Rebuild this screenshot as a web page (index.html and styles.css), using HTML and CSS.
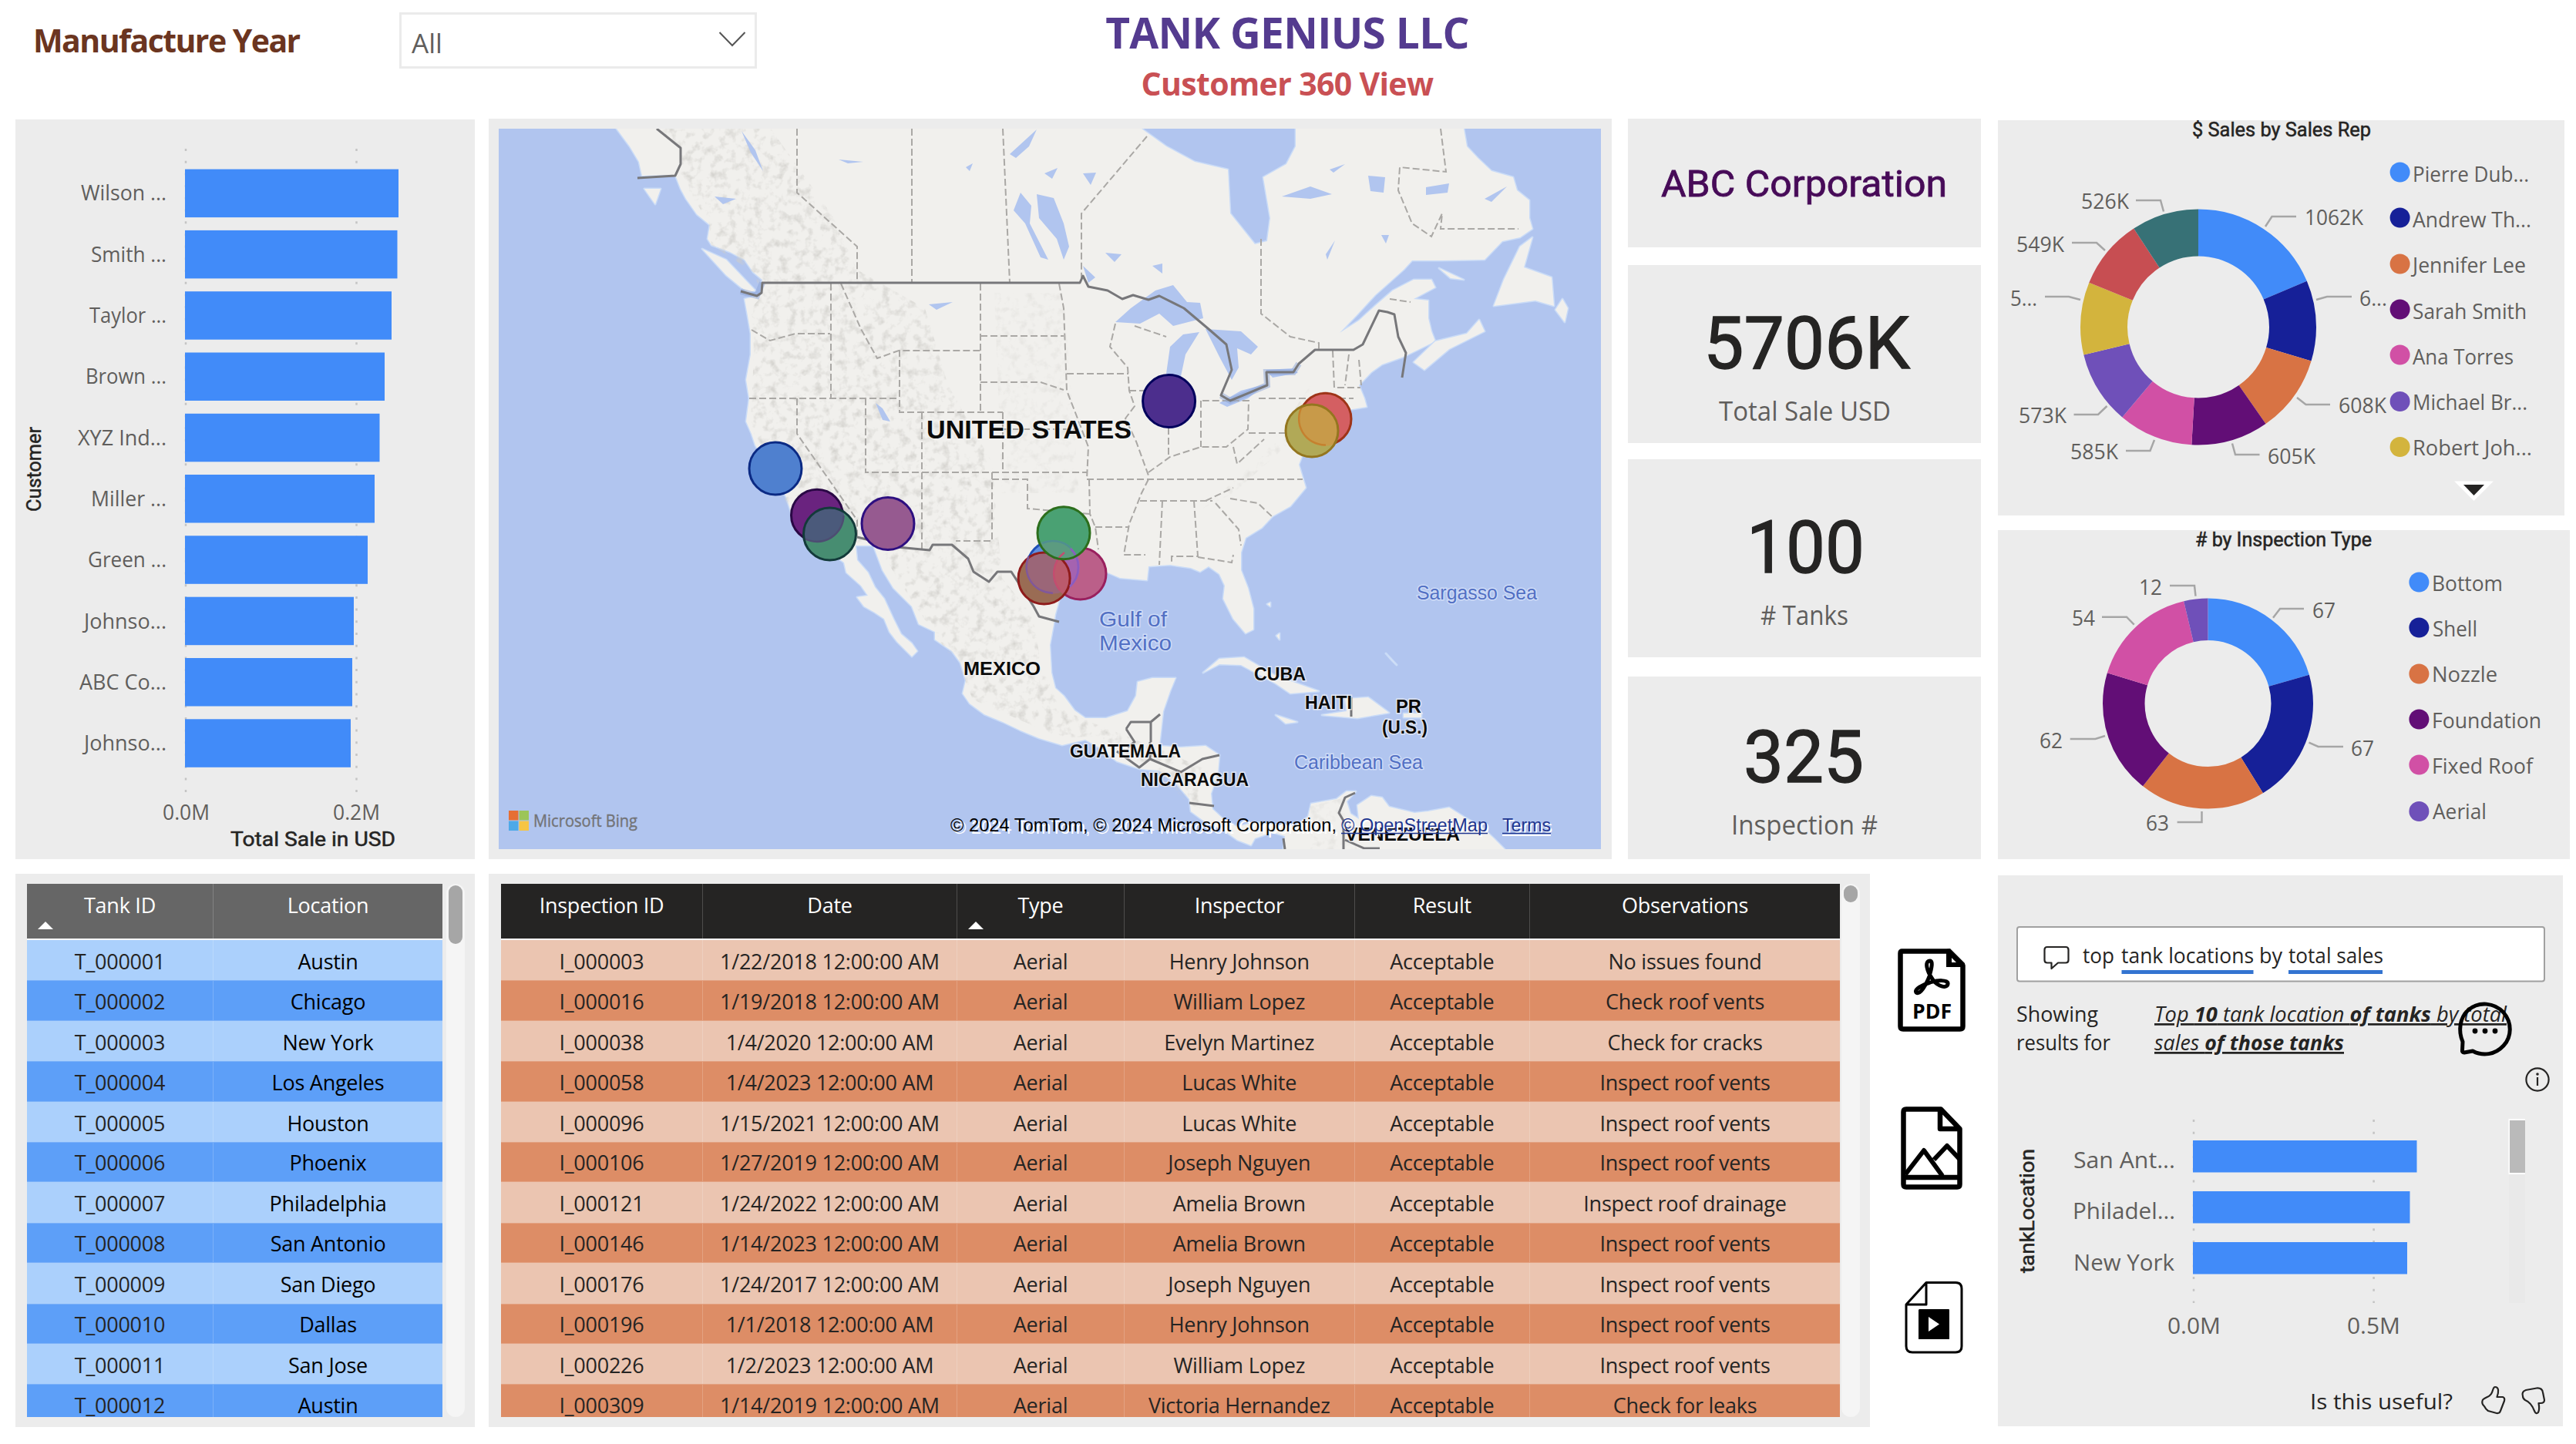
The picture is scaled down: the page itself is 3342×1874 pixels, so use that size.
FILE: index.html
```html
<!DOCTYPE html>
<html lang="en">
<head>
<meta charset="utf-8">
<title>Tank Genius LLC - Customer 360 View</title>
<link rel="stylesheet" href="styles.css">
</head>
<body>
<div class="page">
<header class="top">
  <h2 class="filter-label">Manufacture Year</h2>
  <div class="select"><span>All</span>
    <svg width="36" height="22" viewBox="0 0 36 22"><path d="M1.500 2 18 19 34.500 2" fill="none" stroke="#555" stroke-width="2"/></svg>
  </div>
  <div class="titles"><h1>TANK GENIUS LLC</h1><p>Customer 360 View</p></div>
</header>

<section class="row row-a">
  <div class="panel customers">
    <svg class="fill" viewBox="20 155 596 960">
      <path class="grid" d="M241 193V1030M462.500 193V1030"/>
      <g class="bar">
        <rect x="240" y="219.600" width="277" height="62.500"/><rect x="240" y="298.900" width="275.500" height="62.500"/>
        <rect x="240" y="378.200" width="268" height="62.500"/><rect x="240" y="457.500" width="259" height="62.500"/>
        <rect x="240" y="536.800" width="252.500" height="62.500"/><rect x="240" y="616" width="246" height="62.500"/>
        <rect x="240" y="695.300" width="237" height="62.500"/><rect x="240" y="774.700" width="219" height="62.500"/>
        <rect x="240" y="854" width="217" height="62.500"/><rect x="240" y="933.300" width="215" height="62.500"/>
      </g>
      <g class="seg">
        <text x="105" y="260" textLength="111" lengthAdjust="spacingAndGlyphs">Wilson ...</text>
        <text x="118" y="340" textLength="98" lengthAdjust="spacingAndGlyphs">Smith ...</text>
        <text x="116" y="419" textLength="100" lengthAdjust="spacingAndGlyphs">Taylor ...</text>
        <text x="111" y="498" textLength="105" lengthAdjust="spacingAndGlyphs">Brown ...</text>
        <text x="101" y="578" textLength="115" lengthAdjust="spacingAndGlyphs">XYZ Ind...</text>
        <text x="118" y="657" textLength="98" lengthAdjust="spacingAndGlyphs">Miller ...</text>
        <text x="114" y="736" textLength="102" lengthAdjust="spacingAndGlyphs">Green ...</text>
        <text x="109" y="816" textLength="107" lengthAdjust="spacingAndGlyphs">Johnso...</text>
        <text x="103" y="895" textLength="113" lengthAdjust="spacingAndGlyphs">ABC Co...</text>
        <text x="109" y="974" textLength="107" lengthAdjust="spacingAndGlyphs">Johnso...</text>
        <text x="211" y="1064" textLength="61" lengthAdjust="spacingAndGlyphs">0.0M</text>
        <text x="432" y="1064" textLength="61" lengthAdjust="spacingAndGlyphs">0.2M</text>
      </g>
      <text class="din" x="299" y="1097.500" textLength="214" lengthAdjust="spacingAndGlyphs">Total Sale in USD</text>
      <text class="din" transform="translate(53 664) rotate(-90)" textLength="110" lengthAdjust="spacingAndGlyphs">Customer</text>
    </svg>
  </div>

  <div class="panel map">
    <svg class="fill" viewBox="647 167 1430 935">
      <defs>
        <filter id="relief" x="0" y="0" width="100%" height="100%">
          <feTurbulence type="fractalNoise" baseFrequency="0.09" numOctaves="3" seed="4"/>
          <feColorMatrix values="0 0 0 0 0.62  0 0 0 0 0.61  0 0 0 0 0.58  2.6 0 0 0 -1.250"/>
          <feComposite in2="SourceAlpha" operator="in"/>
        </filter>
        <clipPath id="c-la"><circle cx="1060" cy="668.700" r="35"/></clipPath>
        <clipPath id="c-ny"><circle cx="1719.500" cy="543.700" r="35"/></clipPath>
        <clipPath id="c-au"><circle cx="1366" cy="735.700" r="35"/></clipPath>
        <clipPath id="c-ho"><circle cx="1401.500" cy="744.600" r="35"/></clipPath>
      </defs>
      <rect x="647" y="167" width="1430" height="935" fill="#b1c5ef"/>
      <g class="land">
        <path d="M800 167 817 190 829 210 833 228 876 227 883 245 890 258 904 278 921 292 918 310 923 318 947 327 966 337 977 353 989 363 987 383 966 388 970 410 974 433 974 460 968 493 972 517 968 547 975 563 980 578 1000 610 1020 645 1027 667 1041 693 1060 705 1081 720 1095 730 1098 743 1117 760 1126 773 1112 775 1121 787 1135 795 1147 803 1154 820 1164 833 1183 852 1190 845 1183 835 1169 823 1159 803 1147 777 1135 762 1126 743 1112 727 1110 708 1133 708 1145 740 1159 763 1183 787 1192 810 1213 820 1213 830 1235 845 1246 860 1253 883 1249 900 1258 913 1277 927 1301 937 1324 948 1348 958 1378 967 1408 960 1426 970 1449 988 1479 998 1504 1000 1527 1018 1543 1037 1545 1053 1564 1067 1587 1077 1605 1090 1623 1097 1628 1088 1651 1080 1667 1085 1665 1102 1952 1102 1938 1088 1922 1073 1899 1060 1880 1048 1853 1053 1835 1055 1802 1047 1793 1035 1779 1033 1761 1045 1763 1063 1752 1056 1747 1040 1759 1027 1747 1027 1734 1037 1701 1043 1697 1060 1678 1073 1651 1070 1628 1067 1605 1073 1587 1063 1573 1050 1571 1030 1580 1003 1582 980 1564 968 1532 970 1504 968 1506 950 1509 923 1518 897 1525 880 1495 880 1476 885 1474 903 1463 923 1435 932 1408 932 1394 922 1380 903 1369 893 1364 873 1362 837 1367 810 1369 797 1378 765 1400 748 1437 743 1453 750 1488 753 1490 735 1518 733 1545 737 1557 742 1568 735 1582 745 1589 760 1587 777 1600 803 1616 822 1626 817 1626 790 1619 763 1610 740 1610 717 1616 698 1637 685 1651 670 1674 657 1694 633 1685 603 1690 590 1715 572 1738 550 1743 533 1773 528 1770 517 1763 500 1779 483 1793 473 1821 463 1862 443 1857 430 1853 413 1853 390 1834 388 1862 373 1857 363 1834 363 1807 377 1784 397 1763 416 1738 432 1761 408 1784 383 1802 367 1821 350 1832 338 1871 338 1926 337 1949 313 1972 308 1988 297 1984 283 1984 260 1968 247 1963 230 1935 222 1917 205 1903 190 1899 167 1681 167 1681 190 1669 213 1639 230 1648 283 1644 313 1628 317 1596 277 1593 220 1550 210 1513 190 1481 167Z"/>
        <path d="M911 323 942 337 980 377 970 380 942 357ZM836 245H857L850 265ZM1919 415 1926 430 1880 453 1848 480 1834 470 1862 443 1903 433ZM1988 308 1977 347 2013 360 2016 397 1992 390 1938 397 1951 363 1972 320ZM2027 388 2034 400 2030 418 2018 402ZM1867 348 1899 363 1882 361ZM1561 873 1582 855 1614 853 1655 877 1711 897 1674 900 1655 887 1610 863 1582 862ZM1715 928 1747 923 1745 907 1775 905 1802 925 1761 932ZM1655 928 1683 937 1668 939ZM1821 926H1844V931H1821ZM1644 784 1648 782 1648 787ZM1656 825 1660 822 1660 830ZM1798 848 1812 863 1806 857Z"/>
      </g>
      <g filter="url(#relief)">
        <path opacity=".8" d="M852 167 883 192 883 230 920 290 923 318 977 353 989 383 975 400 978 460 974 547 985 585 1041 693 1110 705 1138 708 1183 780 1249 875 1262 908 1378 958 1426 955 1479 990 1545 1045 1560 1050 1568 1000 1500 970 1435 945 1375 920 1350 860 1340 800 1300 750 1287 600 1230 500 1200 400 1112 350 1080 280 1000 167Z"/>
        <path opacity=".35" d="M1560 660 1640 590 1700 500 1690 560 1600 640ZM1700 1046 1745 1035 1760 1102 1700 1102ZM1290 380 1380 380 1400 640 1300 640Z"/>
      </g>
      <g class="lake">
        <path d="M1447 418 1467 400 1499 377 1522 370 1540 392 1557 393 1561 413 1522 423 1504 407 1479 420ZM1513 485 1518 450 1535 434 1556 431 1538 460 1531 493ZM1564 427 1610 430 1632 450 1623 460 1605 452 1607 477 1598 493 1582 463ZM1582 523 1610 507 1644 498 1619 517 1592 528ZM1642 480 1678 478 1684 484 1651 490ZM1345 252 1367 257 1380 290 1387 320 1380 337 1371 310 1348 283ZM1324 250 1338 267 1336 290 1360 337 1350 334 1330 290 1315 273ZM1405 345 1421 360 1412 367ZM1663 255 1700 242 1728 252 1700 258ZM1775 228 1797 230 1795 250 1778 248ZM1850 243 1880 238 1878 250 1850 253ZM1725 220 1745 213 1730 224ZM1720 330 1732 312 1722 337ZM1792 305 1802 305 1798 316ZM1926 258 1955 242 1935 262ZM1495 345 1508 342 1508 355ZM1434 328 1455 330 1446 340ZM1310 200 1345 168 1335 190 1318 205ZM1355 225 1372 218 1365 232ZM962 170 980 195 990 222 974 198ZM1136 523 1145 530 1155 547 1145 545ZM1205 395 1236 392 1215 402ZM1088 207 1120 210 1100 212ZM1253 217 1262 212 1258 222ZM1405 225 1422 224 1415 240ZM927 255 955 258 938 265Z"/>
      </g>
      <path class="state" d="M1034 167V250L1112 320V363M1183 167V367M1301 167 1310 367M1078 368V517M975 428 999 442 1032 433H1077M972 517H1166M1091 368 1117 427 1138 465 1166 455H1272M1167 454V535H1301M1272 368V535M1272 436H1380M1272 496H1350L1380 506M1374 368 1380 400 1384 507 1398 543 1412 580 1410 622M1034 517V563L1112 675V697M1123 517V613H1410M1196 535V712M1287 613V702H1240M1301 535V613M1301 557H1400M1287 622H1333V660L1414 667M1384 485H1464M1447 420 1440 450 1463 477 1465 507 1472 527 1460 543 1474 573 1490 617M1472 423 1513 437M1465 507H1490M1516 555V590M1558 520V580M1490 613 1518 593 1558 580H1591L1619 557 1620 520H1560M1633 517H1756M1620 562H1670L1680 580M1600 580 1605 602 1640 570M1410 622H1690M1636 310V407L1674 437 1711 445V453M1488 177 1403 277V363M1869 167 1876 223 1816 217 1814 247 1832 290 1857 307 1871 277 1869 297H1970M1729 455 1731 503H1765M1750 460 1745 500M1763 467 1766 500M1479 650H1573M1564 650 1600 633M1596 647 1632 653 1651 671M1508 650 1504 733M1549 650 1554 722H1520V732M1554 723 1598 730 1600 720M1577 653 1607 687 1610 708M1421 684H1465M1490 622 1481 640 1465 680 1458 720H1486M1413 622 1414 667 1421 684 1425 713M1803 388 1830 392"/>
      <path class="halo" d="M1584 513 1596 520 1644 500 1643 483 1678 483 1685 472M961 378 982 384 989 367"/>
      <path class="border" d="M961 378 982 384 988 380 989 367H1401L1405 358 1412 372 1437 377 1456 388 1470 383 1490 389 1504 384 1536 400 1568 427 1591 447 1598 480 1584 513 1596 520 1644 500 1643 483H1678L1685 472 1706 454H1756L1768 447 1789 403 1800 405 1809 408 1814 437 1824 458 1819 490M1112 697 1164 710 1206 714 1210 707H1235L1256 725 1263 742 1283 755 1294 742H1312L1341 787 1348 800 1374 807M852 167 883 192V213L876 228 827 231M1461 946 1467 937H1493V963M1461 946 1472 963 1463 970M1493 937 1505 927M1449 975 1478 996 1492 985 1532 1002 1560 985 1582 980M1492 985V963M1543 1042 1575 1046M1743 1102V1065L1737 1055 1745 1035 1758 1029M1753 905V930M1665 1088 1667 1102M1745 1090 1770 1101H1790"/>
      <g class="country">
        <text x="1202" y="569" font-size="33" textLength="266" lengthAdjust="spacingAndGlyphs">UNITED STATES</text>
        <text x="1250" y="876" font-size="24.500" textLength="100" lengthAdjust="spacingAndGlyphs">MEXICO</text>
        <text x="1627" y="883" textLength="67" lengthAdjust="spacingAndGlyphs">CUBA</text>
        <text x="1693" y="920" textLength="61" lengthAdjust="spacingAndGlyphs">HAITI</text>
        <text x="1811" y="925" textLength="33" lengthAdjust="spacingAndGlyphs">PR</text>
        <text x="1793" y="952" textLength="59" lengthAdjust="spacingAndGlyphs">(U.S.)</text>
        <text x="1388" y="983" textLength="144" lengthAdjust="spacingAndGlyphs">GUATEMALA</text>
        <text x="1480" y="1020" textLength="140" lengthAdjust="spacingAndGlyphs">NICARAGUA</text>
        <text x="1745" y="1091" textLength="149" lengthAdjust="spacingAndGlyphs">VENEZUELA</text>
      </g>
      <g class="sea">
        <text x="1426" y="813" font-size="28.500" textLength="88" lengthAdjust="spacingAndGlyphs">Gulf of</text>
        <text x="1426" y="844" font-size="28.500" textLength="94" lengthAdjust="spacingAndGlyphs">Mexico</text>
        <text x="1838" y="778" textLength="156" lengthAdjust="spacingAndGlyphs">Sargasso Sea</text>
        <text x="1679" y="998" textLength="167" lengthAdjust="spacingAndGlyphs">Caribbean Sea</text>
      </g>
      <g>
        <circle cx="1006" cy="608" r="34" fill="#4f80cf"/>
        <circle cx="1060" cy="668.700" r="34" fill="#6a237f"/>
        <circle cx="1060" cy="668.700" r="33.500" fill="none" stroke="#2a0845" stroke-width="3"/>
        <circle cx="1076.500" cy="693" r="34" fill="#478d71"/>
        <circle cx="1076.500" cy="693" r="34" fill="#4b5a7b" clip-path="url(#c-la)"/>
        <circle cx="1152" cy="679.500" r="34" fill="#965a90"/>
        <circle cx="1516.600" cy="520.500" r="34" fill="#4c2e8d"/>
        <circle cx="1719.500" cy="543.700" r="34" fill="#d45f62"/>
        <circle cx="1719.500" cy="543.700" r="33.500" fill="none" stroke="#9e3418" stroke-width="3"/>
        <circle cx="1702" cy="559" r="34" fill="#b1a957"/>
        <circle cx="1702" cy="559" r="34" fill="#c89a49" clip-path="url(#c-ny)"/>
        <circle cx="1366" cy="735.700" r="33.500" fill="#5f8fe0" stroke="#2050b8" stroke-width="3"/>
        <circle cx="1401.500" cy="744.600" r="34" fill="#bb5f89"/>
        <circle cx="1401.500" cy="744.600" r="34" fill="#a563b0" clip-path="url(#c-au)"/>
        <circle cx="1401.500" cy="744.600" r="33.500" fill="none" stroke="#99205e" stroke-width="3"/>
        <circle cx="1354.600" cy="750.500" r="34" fill="#9a6c54"/>
        <circle cx="1354.600" cy="750.500" r="34" fill="#9b6678" clip-path="url(#c-au)"/>
        <circle cx="1354.600" cy="750.500" r="34" fill="#bb5a6c" clip-path="url(#c-ho)"/>
        <circle cx="1354.600" cy="750.500" r="33.500" fill="none" stroke="#8f1b1b" stroke-width="3"/>
        <circle cx="1380" cy="691.700" r="34" fill="#4aa173"/>
        <circle cx="1380" cy="691.700" r="34" fill="#5c9b80" clip-path="url(#c-au)"/>
      </g>
      <g class="ghost">
        <path stroke="#4d4d72" d="M1094.500 669A34.500 34.500 0 0 1 1044 699"/>
        <path stroke="#c5812f" d="M1720 577.500A34 34 0 0 1 1690 526"/>
        <path stroke="#80589a" d="M1334.500 722A34 34 0 0 0 1366 769.700"/>
        <path stroke="#8a5cc0" d="M1389 712A34 34 0 0 1 1388 761"/>
        <path stroke="#c34d70" d="M1381 717A34 34 0 0 0 1375 766"/>
        <path stroke="#4f8f90" d="M1352 705A34 34 0 0 1 1389 711"/>
      </g>
      <g class="outline">
        <circle cx="1006" cy="608" r="34" stroke="#0b2a84"/>
        <circle cx="1076.500" cy="693" r="34" stroke="#133a3a"/>
        <circle cx="1152" cy="679.500" r="34" stroke="#2d0f80"/>
        <circle cx="1516.600" cy="520.500" r="34" stroke="#00005c"/>
        <circle cx="1702" cy="559" r="34" stroke="#94761f"/>
        <circle cx="1380" cy="691.700" r="34" stroke="#2c6e1c"/>
      </g>
      <path fill="#e66f34" d="M660 1052h12.500v12.500h-12.500z"/><path fill="#9cc558" d="M673.500 1052h12.500v12.500h-12.500z"/>
      <path fill="#4ea9e8" d="M660 1065.500h12.500v12.500h-12.500z"/><path fill="#f6c544" d="M673.500 1065.500h12.500v12.500h-12.500z"/>
      <text class="bing" x="692" y="1073" textLength="135" lengthAdjust="spacingAndGlyphs">Microsoft Bing</text>
      <g class="credit">
        <text x="1233" y="1079" textLength="501" lengthAdjust="spacingAndGlyphs">© 2024 TomTom, © 2024 Microsoft Corporation,</text>
        <text class="link" x="1740" y="1079" textLength="190" lengthAdjust="spacingAndGlyphs">© OpenStreetMap</text>
        <text class="link" x="1949" y="1079" textLength="63" lengthAdjust="spacingAndGlyphs">Terms</text>
      </g>
      <path d="M1949 1084H2012" stroke="#fff" stroke-width="2"/>
      <path d="M1740 1081.500H1930M1949 1081.500H2012" stroke="#1e3690" stroke-width="1.500"/>
    </svg>
  </div>

  <div class="kpis">
    <div class="panel k1"><svg class="fill" viewBox="2112 154 458 167">
      <text class="corp" x="2155" y="254.500" textLength="371" lengthAdjust="spacingAndGlyphs">ABC Corporation</text></svg></div>
    <div class="panel k2"><svg class="fill" viewBox="2112 344 458 231">
      <text class="num" x="2210" y="478" textLength="268" lengthAdjust="spacingAndGlyphs">5706K</text>
      <text class="cap" x="2230" y="545.500" textLength="223" lengthAdjust="spacingAndGlyphs">Total Sale USD</text></svg></div>
    <div class="panel k3"><svg class="fill" viewBox="2112 596 458 257">
      <text class="num" x="2266" y="743" textLength="153" lengthAdjust="spacingAndGlyphs">100</text>
      <text class="cap" x="2284" y="811" textLength="114" lengthAdjust="spacingAndGlyphs"># Tanks</text></svg></div>
    <div class="panel k4"><svg class="fill" viewBox="2112 878 458 237">
      <text class="num" x="2262" y="1015" textLength="156" lengthAdjust="spacingAndGlyphs">325</text>
      <text class="cap" x="2246" y="1083" textLength="190" lengthAdjust="spacingAndGlyphs">Inspection #</text></svg></div>
  </div>

  <div class="donuts">
    <div class="panel d1"><svg class="fill" viewBox="2592 156 735 513">
      <text class="din" x="2844" y="177" textLength="232" lengthAdjust="spacingAndGlyphs">$ Sales by Sales Rep</text>
      <g class="ring" stroke-width="61" transform="rotate(-90 2852 424.500)">
        <circle cx="2852" cy="424.500" r="122.500" pathLength="5706" stroke="#418bf9" stroke-dasharray="1062 5706"/>
        <circle cx="2852" cy="424.500" r="122.500" pathLength="5706" stroke="#162098" stroke-dasharray="630 5706" stroke-dashoffset="-1062"/>
        <circle cx="2852" cy="424.500" r="122.500" pathLength="5706" stroke="#d87344" stroke-dasharray="608 5706" stroke-dashoffset="-1692"/>
        <circle cx="2852" cy="424.500" r="122.500" pathLength="5706" stroke="#620e76" stroke-dasharray="605 5706" stroke-dashoffset="-2300"/>
        <circle cx="2852" cy="424.500" r="122.500" pathLength="5706" stroke="#d150a5" stroke-dasharray="585 5706" stroke-dashoffset="-2905"/>
        <circle cx="2852" cy="424.500" r="122.500" pathLength="5706" stroke="#6f50b9" stroke-dasharray="573 5706" stroke-dashoffset="-3490"/>
        <circle cx="2852" cy="424.500" r="122.500" pathLength="5706" stroke="#d3b43d" stroke-dasharray="568 5706" stroke-dashoffset="-4063"/>
        <circle cx="2852" cy="424.500" r="122.500" pathLength="5706" stroke="#c74e52" stroke-dasharray="549 5706" stroke-dashoffset="-4631"/>
        <circle cx="2852" cy="424.500" r="122.500" pathLength="5706" stroke="#377176" stroke-dasharray="526 5706" stroke-dashoffset="-5180"/>
      </g>
      <path class="lead" d="M2771 260H2803L2807 274.500M2939 294 2947.500 281H2979M2688 315H2720L2731 325M2653 385H2684L2699 389M3005 389 3019 385H3051M2980 516 2991.500 525H3023M2896 575.500 2900 590H2931.500M2758 585H2789.500L2795 571M2690.500 538H2722L2733.500 527"/>
      <g class="seg">
        <text x="2700" y="271" textLength="62" lengthAdjust="spacingAndGlyphs">526K</text>
        <text x="2990" y="292" textLength="76" lengthAdjust="spacingAndGlyphs">1062K</text>
        <text x="2616" y="326.500" textLength="62" lengthAdjust="spacingAndGlyphs">549K</text>
        <text x="2608" y="397" textLength="35" lengthAdjust="spacingAndGlyphs">5...</text>
        <text x="3061" y="397" textLength="36" lengthAdjust="spacingAndGlyphs">6...</text>
        <text x="3034" y="535.500" textLength="62" lengthAdjust="spacingAndGlyphs">608K</text>
        <text x="2942" y="601.500" textLength="62" lengthAdjust="spacingAndGlyphs">605K</text>
        <text x="2686" y="596" textLength="62" lengthAdjust="spacingAndGlyphs">585K</text>
        <text x="2619" y="549" textLength="62" lengthAdjust="spacingAndGlyphs">573K</text>
        <text x="3130" y="235.500" textLength="151" lengthAdjust="spacingAndGlyphs">Pierre Dub...</text>
        <text x="3130" y="295" textLength="154" lengthAdjust="spacingAndGlyphs">Andrew Th...</text>
        <text x="3130" y="354" textLength="147" lengthAdjust="spacingAndGlyphs">Jennifer Lee</text>
        <text x="3130" y="413.500" textLength="148" lengthAdjust="spacingAndGlyphs">Sarah Smith</text>
        <text x="3130" y="472.500" textLength="131" lengthAdjust="spacingAndGlyphs">Ana Torres</text>
        <text x="3130" y="531.500" textLength="149" lengthAdjust="spacingAndGlyphs">Michael Br...</text>
        <text x="3130" y="591" textLength="155" lengthAdjust="spacingAndGlyphs">Robert Joh...</text>
      </g>
      <g><circle cx="3113.600" cy="223.500" r="13" fill="#418bf9"/><circle cx="3113.600" cy="282.500" r="13" fill="#162098"/><circle cx="3113.600" cy="342.500" r="13" fill="#d87344"/><circle cx="3113.600" cy="401.500" r="13" fill="#620e76"/><circle cx="3113.600" cy="460.500" r="13" fill="#d150a5"/><circle cx="3113.600" cy="521" r="13" fill="#6f50b9"/><circle cx="3113.600" cy="580" r="13" fill="#d3b43d"/></g>
      <path fill="#fff" d="M3184 624.500H3235L3209.500 650Z"/><path fill="#252423" d="M3196 629H3223L3209.500 643Z"/>
    </svg></div>
    <div class="panel d2"><svg class="fill" viewBox="2592 688 742 427">
      <text class="din" x="2848" y="709" textLength="229" lengthAdjust="spacingAndGlyphs"># by Inspection Type</text>
      <g class="ring" stroke-width="54.500" transform="rotate(-90 2864.500 913)">
        <circle cx="2864.500" cy="913" r="109.250" pathLength="325" stroke="#418bf9" stroke-dasharray="67 325"/>
        <circle cx="2864.500" cy="913" r="109.250" pathLength="325" stroke="#162098" stroke-dasharray="67 325" stroke-dashoffset="-67"/>
        <circle cx="2864.500" cy="913" r="109.250" pathLength="325" stroke="#d87344" stroke-dasharray="63 325" stroke-dashoffset="-134"/>
        <circle cx="2864.500" cy="913" r="109.250" pathLength="325" stroke="#620e76" stroke-dasharray="62 325" stroke-dashoffset="-197"/>
        <circle cx="2864.500" cy="913" r="109.250" pathLength="325" stroke="#d150a5" stroke-dasharray="54 325" stroke-dashoffset="-259"/>
        <circle cx="2864.500" cy="913" r="109.250" pathLength="325" stroke="#6f50b9" stroke-dasharray="12 325" stroke-dashoffset="-313"/>
      </g>
      <path class="lead" d="M2815 760H2847L2848.500 773.700M2949 801.700 2958 790H2989M2727 800.700H2759L2768.700 810.700M2685.700 959H2718.400L2731 955M2995.500 963.700 3007.500 969H3040M2824.600 1067H2856.500V1053"/>
      <g class="seg">
        <text x="2775" y="771.500" textLength="30" lengthAdjust="spacingAndGlyphs">12</text>
        <text x="3000" y="801.500" textLength="30" lengthAdjust="spacingAndGlyphs">67</text>
        <text x="2688" y="811.500" textLength="30" lengthAdjust="spacingAndGlyphs">54</text>
        <text x="2646" y="970.500" textLength="30" lengthAdjust="spacingAndGlyphs">62</text>
        <text x="3050" y="981" textLength="30" lengthAdjust="spacingAndGlyphs">67</text>
        <text x="2784" y="1077.500" textLength="30" lengthAdjust="spacingAndGlyphs">63</text>
        <text x="3155" y="767" textLength="92" lengthAdjust="spacingAndGlyphs">Bottom</text>
        <text x="3156" y="826" textLength="58" lengthAdjust="spacingAndGlyphs">Shell</text>
        <text x="3155" y="885" textLength="85" lengthAdjust="spacingAndGlyphs">Nozzle</text>
        <text x="3155" y="945" textLength="142" lengthAdjust="spacingAndGlyphs">Foundation</text>
        <text x="3155" y="1004" textLength="131" lengthAdjust="spacingAndGlyphs">Fixed Roof</text>
        <text x="3156" y="1063" textLength="70" lengthAdjust="spacingAndGlyphs">Aerial</text>
      </g>
      <g><circle cx="3138.400" cy="755.500" r="13" fill="#418bf9"/><circle cx="3138.400" cy="814.500" r="13" fill="#162098"/><circle cx="3138.400" cy="874.500" r="13" fill="#d87344"/><circle cx="3138.400" cy="933.500" r="13" fill="#620e76"/><circle cx="3138.400" cy="992.500" r="13" fill="#d150a5"/><circle cx="3138.400" cy="1053" r="13" fill="#6f50b9"/></g>
    </svg></div>
  </div>
</section>

<section class="row row-b">
  <div class="panel tanks">
    <div class="table">
      <div class="tr th"><span>Tank ID<i class="sort"></i></span><span>Location</span></div>
      <div class="tr"><span>T_000001</span><span>Austin</span></div>
      <div class="tr"><span>T_000002</span><span>Chicago</span></div>
      <div class="tr"><span>T_000003</span><span>New York</span></div>
      <div class="tr"><span>T_000004</span><span>Los Angeles</span></div>
      <div class="tr"><span>T_000005</span><span>Houston</span></div>
      <div class="tr"><span>T_000006</span><span>Phoenix</span></div>
      <div class="tr"><span>T_000007</span><span>Philadelphia</span></div>
      <div class="tr"><span>T_000008</span><span>San Antonio</span></div>
      <div class="tr"><span>T_000009</span><span>San Diego</span></div>
      <div class="tr"><span>T_000010</span><span>Dallas</span></div>
      <div class="tr"><span>T_000011</span><span>San Jose</span></div>
      <div class="tr"><span>T_000012</span><span>Austin</span></div>
    </div>
    <div class="track"><div class="thumb tall"></div></div>
  </div>
  <div class="panel inspections">
    <div class="table">
      <div class="tr th"><span>Inspection ID</span><span>Date</span><span><i class="sort"></i>Type</span><span>Inspector</span><span>Result</span><span>Observations</span></div>
      <div class="tr"><span>I_000003</span><span>1/22/2018 12:00:00 AM</span><span>Aerial</span><span>Henry Johnson</span><span>Acceptable</span><span>No issues found</span></div>
      <div class="tr"><span>I_000016</span><span>1/19/2018 12:00:00 AM</span><span>Aerial</span><span>William Lopez</span><span>Acceptable</span><span>Check roof vents</span></div>
      <div class="tr"><span>I_000038</span><span>1/4/2020 12:00:00 AM</span><span>Aerial</span><span>Evelyn Martinez</span><span>Acceptable</span><span>Check for cracks</span></div>
      <div class="tr"><span>I_000058</span><span>1/4/2023 12:00:00 AM</span><span>Aerial</span><span>Lucas White</span><span>Acceptable</span><span>Inspect roof vents</span></div>
      <div class="tr"><span>I_000096</span><span>1/15/2021 12:00:00 AM</span><span>Aerial</span><span>Lucas White</span><span>Acceptable</span><span>Inspect roof vents</span></div>
      <div class="tr"><span>I_000106</span><span>1/27/2019 12:00:00 AM</span><span>Aerial</span><span>Joseph Nguyen</span><span>Acceptable</span><span>Inspect roof vents</span></div>
      <div class="tr"><span>I_000121</span><span>1/24/2022 12:00:00 AM</span><span>Aerial</span><span>Amelia Brown</span><span>Acceptable</span><span>Inspect roof drainage</span></div>
      <div class="tr"><span>I_000146</span><span>1/14/2023 12:00:00 AM</span><span>Aerial</span><span>Amelia Brown</span><span>Acceptable</span><span>Inspect roof vents</span></div>
      <div class="tr"><span>I_000176</span><span>1/24/2017 12:00:00 AM</span><span>Aerial</span><span>Joseph Nguyen</span><span>Acceptable</span><span>Inspect roof vents</span></div>
      <div class="tr"><span>I_000196</span><span>1/1/2018 12:00:00 AM</span><span>Aerial</span><span>Henry Johnson</span><span>Acceptable</span><span>Inspect roof vents</span></div>
      <div class="tr"><span>I_000226</span><span>1/2/2023 12:00:00 AM</span><span>Aerial</span><span>William Lopez</span><span>Acceptable</span><span>Inspect roof vents</span></div>
      <div class="tr"><span>I_000309</span><span>1/14/2019 12:00:00 AM</span><span>Aerial</span><span>Victoria Hernandez</span><span>Acceptable</span><span>Check for leaks</span></div>
    </div>
    <div class="track"><div class="thumb"></div></div>
  </div>

  <div class="files">
    <svg class="pdf" width="88" height="108" viewBox="0 0 88 108">
      <path d="M5 3.500H66L84.500 22V101Q84.500 104.500 81 104.500H7Q3.500 104.500 3.500 101V6Q3.500 3.500 6 3.500Z" fill="none" stroke="#000" stroke-width="6.500" stroke-linejoin="round"/>
      <path d="M63 1V24H87V19L68 0ZM70 10 79 18H70Z" fill="#000" fill-rule="evenodd"/>
      <path d="M42 16C34 16 38 30 46 41C53 50 64 52 65 46C66 40 51 41 42 44C32 47 21 53 24 57C29 61 37 47 41 36C44 26 46 16 42 16Z" fill="none" stroke="#000" stroke-width="5"/>
      <text x="44.500" y="91" text-anchor="middle" textLength="51" lengthAdjust="spacingAndGlyphs">PDF</text>
    </svg>
    <svg class="img" width="80" height="108" viewBox="0 0 80 108" fill="none" stroke="#000" stroke-width="6.500" stroke-linejoin="round">
      <path d="M7 3.500H52L76.500 29V101Q76.500 104.500 73 104.500H7Q3.500 104.500 3.500 101V7Q3.500 3.500 7 3.500ZM51 4V29H76M4 92H76"/>
      <path d="M6 88 30 57 54 90M43 69 60 51 76 68" stroke-width="6"/>
    </svg>
    <svg class="vid" width="76" height="94" viewBox="0 0 76 94">
      <path d="M28 1.500H66Q74 1.500 74 9.500V84Q74 92 66 92H10Q2 92 2 84V30ZM28 1.500V30H2" fill="none" stroke="#000" stroke-width="3" stroke-linejoin="round"/>
      <path d="M19 36H57Q58 36 58 37V75H18V37ZM31 46V65L45 55.500Z" fill-rule="evenodd"/>
    </svg>
  </div>

  <div class="panel qa">
    <svg class="fill" viewBox="2592 1136 733 715">
      <rect x="2617" y="1203" width="684" height="70.500" rx="3" fill="#fff" stroke="#a0a0a0" stroke-width="2"/>
      <path class="ink" d="M2656 1229H2680Q2683.500 1229 2683.500 1232.500V1246Q2683.500 1249.500 2680 1249.500H2670L2661.500 1257V1249.500H2656Q2652.500 1249.500 2652.500 1246V1232.500Q2652.500 1229 2656 1229Z"/>
      <g class="ask">
        <text x="2702" y="1250" textLength="41" lengthAdjust="spacingAndGlyphs">top</text>
        <text x="2752" y="1250" textLength="172" lengthAdjust="spacingAndGlyphs">tank locations</text>
        <text x="2931" y="1250" textLength="30" lengthAdjust="spacingAndGlyphs">by</text>
        <text x="2969" y="1250" textLength="123" lengthAdjust="spacingAndGlyphs">total sales</text>
        <text x="2616" y="1326" textLength="106" lengthAdjust="spacingAndGlyphs">Showing</text>
        <text x="2616" y="1363" textLength="122" lengthAdjust="spacingAndGlyphs">results for</text>
        <text class="it" x="2795" y="1326" textLength="457" lengthAdjust="spacingAndGlyphs">Top <tspan class="b">10</tspan> tank location <tspan class="b">of tanks</tspan> by total</text>
        <text class="it" x="2795" y="1363" textLength="246" lengthAdjust="spacingAndGlyphs">sales <tspan class="b">of those tanks</tspan></text>
        <text x="2997" y="1829" textLength="185" lengthAdjust="spacingAndGlyphs">Is this useful?</text>
      </g>
      <path d="M2752.500 1261.500H2923.500M2969 1261.500H3091" stroke="#3374d1" stroke-width="5"/>
      <path d="M3195 1352C3189 1338 3191 1321 3202 1311C3216 1299 3236 1301 3248 1314C3259 1327 3259 1345 3248 1357C3237 1369 3221 1371 3208 1364L3197 1366Q3194 1366 3194.500 1363Z" fill="none" stroke="#000" stroke-width="5" stroke-linejoin="round"/>
      <circle cx="3211" cy="1338" r="3.400"/><circle cx="3224" cy="1338" r="3.400"/><circle cx="3237" cy="1338" r="3.400"/>
      <circle class="ink" cx="3292" cy="1401" r="14.600"/><path d="M3292 1398V1409" class="ink"/><circle cx="3292" cy="1394" r="1.800" fill="#252423"/>
      <path class="grid" d="M2846 1453V1691M3079.600 1453V1691"/>
      <g class="bar"><rect x="2845" y="1480" width="290.500" height="41.500"/><rect x="2845" y="1546" width="281.500" height="41.500"/><rect x="2845" y="1612" width="278" height="41.500"/></g>
      <g class="seg big">
        <text x="2690" y="1515.500" textLength="132" lengthAdjust="spacingAndGlyphs">San Ant...</text>
        <text x="2689" y="1581.500" textLength="133" lengthAdjust="spacingAndGlyphs">Philadel...</text>
        <text x="2690" y="1648.500" textLength="131" lengthAdjust="spacingAndGlyphs">New York</text>
        <text x="2812" y="1731" textLength="69" lengthAdjust="spacingAndGlyphs">0.0M</text>
        <text x="3045" y="1731" textLength="69" lengthAdjust="spacingAndGlyphs">0.5M</text>
      </g>
      <text class="din" transform="translate(2639 1652) rotate(-90)" textLength="161" lengthAdjust="spacingAndGlyphs">tankLocation</text>
      <rect x="3255" y="1523" width="21" height="168" fill="#e9e9e9"/><rect x="3254.500" y="1452" width="21.500" height="72" fill="#fff"/><rect x="3256" y="1454" width="20" height="68" fill="#bababa"/>
      <path class="ink" d="M3220.500 1818C3221 1814 3229 1814 3232 1809C3235 1804 3234 1800 3237 1800C3242 1800 3242 1806 3239.500 1813H3247Q3250 1814 3249 1818L3244 1831Q3243 1834.500 3239 1834L3228 1831Q3225 1829 3223 1825Q3219.500 1822 3220.500 1818Z"/>
      <path class="ink" d="M3273 1812Q3271 1806 3277 1804L3291 1801.500Q3298 1801 3299 1807L3301 1817Q3301 1821 3296 1821H3293.500Q3295 1829 3293 1833Q3290 1836 3288 1831C3285 1823 3281 1819 3276 1817Q3273 1815 3273 1812Z"/>
    </svg>
  </div>
</section>
</div>
</body>
</html>
```
FILE: styles.css
```css
* { box-sizing: border-box; }
body { margin: 0; background: #fff; font-family: "Open Sans", "Noto Sans", sans-serif; color: #252423; }
h1, h2, p { margin: 0; }
.page { width: 3342px; height: 1874px; overflow: hidden; display: flex; flex-direction: column; }
svg text { white-space: pre; }

.top { height: 154px; display: flex; align-items: flex-start; padding-left: 43px; flex: none; }
.filter-label { width: 475px; font: bold 41px/1 "Open Sans", sans-serif; color: #6b3520; padding-top: 32px; white-space: nowrap; letter-spacing: -1.550px; }
.select { width: 464px; height: 73px; margin-top: 16px; border: 3px solid #ebebeb; display: flex; align-items: center; justify-content: space-between; padding: 6px 11px 0 13px; font-size: 35px; color: #605e5c; }
.select svg { margin-bottom: 9px; }
.titles { width: 1376px; text-align: center; white-space: nowrap; }
.titles h1 { font-size: 55px; line-height: 60px; margin-top: 12px; letter-spacing: -.700px; color: #543b8f; }
.titles p { font-weight: 700; font-size: 41px; line-height: 50px; margin-top: 11px; letter-spacing: -.650px; color: #c95054; }

.row { display: flex; padding-left: 20px; flex: none; }
.row-a { height: 961px; }
.row-b { height: 718px; margin-top: 19px; }
.panel { background: #ececec; flex: none; }
.fill { display: block; width: 100%; height: 100%; }
.customers { width: 596px; margin: 1px 18px 0 0; }
.map { width: 1457px; margin-right: 21px; padding: 13px 14px 13px 13px; }
.kpis { width: 458px; margin-right: 22px; display: flex; flex-direction: column; }
.k1 { height: 167px; margin-bottom: 23px; }
.k2 { height: 231px; margin-bottom: 21px; }
.k3 { height: 257px; margin-bottom: 25px; }
.k4 { height: 237px; }
.donuts { display: flex; flex-direction: column; padding-top: 2px; }
.d1 { width: 735px; height: 513px; margin-bottom: 19px; }
.d2 { width: 742px; height: 427px; }

.seg text { font-size: 28px; fill: #605e5c; }
.seg.big text { font-size: 30px; }
.din { font: 400 25px Roboto, sans-serif; fill: #252423; stroke: #252423; stroke-width: .5; }
.corp { font: 400 48px Roboto, sans-serif; fill: #470b58; stroke: #470b58; stroke-width: .8; }
.num { font: 400 94px Roboto, sans-serif; fill: #252423; stroke: #252423; stroke-width: 1.300; }
.cap { font-size: 34px; fill: #605e5c; }
.bar rect { fill: #418bf9; }
.grid { stroke: #c4c4c4; stroke-width: 2.500; stroke-dasharray: 3 12.700; fill: none; }
.lead { fill: none; stroke: #a6a6a6; stroke-width: 2.500; }
.ring { fill: none; }

.land { fill: #f1f0ed; stroke: #c9dbf7; stroke-width: 3; stroke-linejoin: round; paint-order: stroke; }
.lake { fill: #b1c5ef; }
.state { fill: none; stroke: #aaa8a5; stroke-width: 2; stroke-dasharray: 9 4; }
.halo { fill: none; stroke: #8ea6d8; stroke-width: 8; opacity: .5; }
.border { fill: none; stroke: #77777a; stroke-width: 3; stroke-linejoin: round; }
.country text { font-family: "Liberation Sans", sans-serif; font-weight: 700; fill: #0b0b0b; stroke: #f4f4f4; stroke-width: 3; stroke-opacity: .7; paint-order: stroke; }
.country { font-size: 23px; }
.sea { font-size: 25.500px; }
.sea text { font-family: "Liberation Sans", sans-serif; fill: #5270c4; stroke: #cfdcf7; stroke-width: 3; paint-order: stroke; }
.outline circle { fill: none; stroke-width: 3; }
.ghost path { fill: none; stroke-width: 2.500; }
.bing { font-size: 22px; fill: #737477; stroke: #737477; stroke-width: .4; }
.credit text { font: 23.500px "Liberation Sans", sans-serif; fill: #000; text-shadow: 3px 3px 0 #fff; }
.credit .link { fill: #1e3690; text-shadow: 2px 2px 0 #fff; }

.tanks, .inspections { height: 718px; padding: 13px 13px 13px 15px; display: flex; justify-content: space-between; }
.tanks { width: 596px; margin-right: 18px; }
.inspections { width: 1792px; padding-left: 16px; }
.table { height: 692px; overflow: hidden; font-size: 27px; letter-spacing: -.250px; }
.tanks .table { width: 539px; }
.inspections .table { width: 1737px; }
.tr { display: grid; height: 52.400px; }
.tanks .tr { grid-template-columns: 242px 1fr; background: #abd0fc; }
.inspections .tr { grid-template-columns: 262px 330px 217px 298.500px 227.500px 1fr; background: #ebc5b1; }
.tr:nth-child(odd) { border-top: 1px solid #ffffff30; border-bottom: 1px solid #ffffff30; }
.tanks .tr:nth-child(odd) { background: #5d9ff8; }
.inspections .tr:nth-child(odd) { background: #dd8d66; }
.tr span { text-align: center; line-height: 36px; padding-top: 10px; border-right: 1px solid #ffffff30; white-space: nowrap; position: relative; }
.tr:nth-child(odd) span { padding-top: 8.500px; }
.tr span:last-child { border-right: 0; }
.tanks .tr span:last-child { color: #000; }
.tr.th { height: 73px; border: 0; border-bottom: 2px solid #fff; }
.tr.th span, .tanks .tr.th span:last-child { color: #fff; padding-top: 10px; }
.tanks .tr.th:nth-child(odd) { background: #666; }
.inspections .tr.th:nth-child(odd) { background: #252423; }
.sort { position: absolute; left: 14px; top: 49px; border: 10px solid transparent; border-top: 0; border-bottom: 10px solid #fff; }
.track { width: 24px; height: 692px; border-radius: 12px; background: #f5f5f5; padding: 2px 3px; }
.thumb { height: 22px; border-radius: 9px; background: #a6a6a6; }
.thumb.tall { height: 76px; }

.files { width: 166px; display: flex; flex-direction: column; }
.pdf { margin: 97px 0 0 36px; }
.pdf text { font: 700 27px "Open Sans", sans-serif; }
.img { margin: 97px 0 0 40px; }
.vid { margin: 119px 0 0 45px; }
.qa { width: 733px; height: 715px; margin-top: 2px; }
.ask text { font-size: 27.500px; fill: #252423; }
.ask .it { font-style: italic; text-decoration: underline; text-decoration-thickness: 2px; text-underline-offset: 4px; }
.ask .b { font-weight: 700; }
.ink { fill: none; stroke: #252423; stroke-width: 2.200; stroke-linejoin: round; }
```
